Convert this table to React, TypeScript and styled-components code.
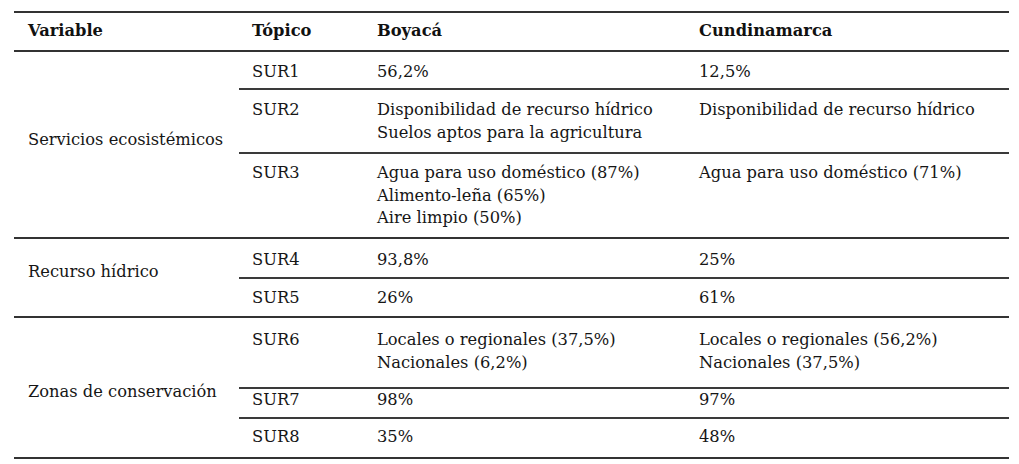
import * as React from "react";
import styled, { createGlobalStyle } from "styled-components";

const GlobalStyle = createGlobalStyle`
  html, body {
    margin: 0;
    padding: 0;
    background: #ffffff;
  }
  body {
    font-family: "DejaVu Serif", "Liberation Serif", serif;
    color: #161616;
  }
`;

interface Row {
  topic: string
  boyaca: string[]
  cundinamarca: string[]
  height: number
  pad: number
}

interface Group {
  variable: string
  offset: number
  rows: Row[]
}

const groups: Group[] = [
  {
    variable: "Servicios ecosistémicos",
    offset: -4,
    rows: [
      { topic: "SUR1", boyaca: ["56,2%"], cundinamarca: ["12,5%"], height: 36, pad: 9 },
      {
        topic: "SUR2",
        boyaca: ["Disponibilidad de recurso hídrico", "Suelos aptos para la agricultura"],
        cundinamarca: ["Disponibilidad de recurso hídrico"],
        height: 62,
        pad: 9
      },
      {
        topic: "SUR3",
        boyaca: ["Agua para uso doméstico (87%)", "Alimento-leña (65%)", "Aire limpio (50%)"],
        cundinamarca: ["Agua para uso doméstico (71%)"],
        height: 83,
        pad: 8
      }
    ]
  },
  {
    variable: "Recurso hídrico",
    offset: -5,
    rows: [
      { topic: "SUR4", boyaca: ["93,8%"], cundinamarca: ["25%"], height: 38, pad: 10 },
      { topic: "SUR5", boyaca: ["26%"], cundinamarca: ["61%"], height: 37, pad: 8 }
    ]
  },
  {
    variable: "Zonas de conservación",
    offset: 5,
    rows: [
      {
        topic: "SUR6",
        boyaca: ["Locales o regionales (37,5%)", "Nacionales (6,2%)"],
        cundinamarca: ["Locales o regionales (56,2%)", "Nacionales (37,5%)"],
        height: 69,
        pad: 11
      },
      { topic: "SUR7", boyaca: ["98%"], cundinamarca: ["97%"], height: 28, pad: 0 },
      { topic: "SUR8", boyaca: ["35%"], cundinamarca: ["48%"], height: 38, pad: 7 }
    ]
  }
];

const Table = styled.div`
  width: 995px;
  margin: 11px 0 0 14px;
  border-top: 2px solid #333333;
  font-size: 16.3px;
  line-height: 22.5px;
`;

const Header = styled.div`
  display: grid;
  grid-template-columns: 225px 125px 322px 1fr;
  align-items: center;
  height: 37px;
  border-bottom: 2px solid #333333;
  font-weight: bold;
  color: #111111;
`;

const HeadCell = styled.div<{ $first?: boolean }>`
  padding-left: ${(p) => (p.$first ? 14 : 13)}px;
`;

const GroupBox = styled.div`
  display: flex;
  border-bottom: 2px solid #333333;
`;

const VarCell = styled.div<{ $offset: number }>`
  width: 225px;
  flex: none;
  display: flex;
  align-items: center;
  padding-left: 14px;
  box-sizing: border-box;
  padding-top: ${(p) => (p.$offset > 0 ? p.$offset * 2 : 0)}px;
  padding-bottom: ${(p) => (p.$offset < 0 ? -p.$offset * 2 : 0)}px;
`;

const Rows = styled.div`
  flex: 1;
  display: flex;
  flex-direction: column;
`;

const RowBox = styled.div<{ $height: number; $pad: number }>`
  display: grid;
  grid-template-columns: 125px 322px 1fr;
  align-items: start;
  height: ${(p) => p.$height}px;
  box-sizing: content-box;
  & > div {
    padding-top: ${(p) => p.$pad}px;
    padding-left: 13px;
  }
  &:not(:last-child) {
    border-bottom: 2px solid #3a3a3a;
  }
`;

const Cell = styled.div`
  white-space: nowrap;
`;

const Lines = ({ lines }: { lines: string[] }) => (
  <Cell>
    {lines.map((l, i) => (
      <div key={i}>{l}</div>
    ))}
  </Cell>
);

export default function App() {
  return (
    <>
      <GlobalStyle />
      <Table>
        <Header>
          <HeadCell $first>Variable</HeadCell>
          <HeadCell>Tópico</HeadCell>
          <HeadCell>Boyacá</HeadCell>
          <HeadCell>Cundinamarca</HeadCell>
        </Header>
        {groups.map((g) => (
          <GroupBox key={g.variable}>
            <VarCell $offset={g.offset}>{g.variable}</VarCell>
            <Rows>
              {g.rows.map((r) => (
                <RowBox key={r.topic} $height={r.height} $pad={r.pad}>
                  <Cell>{r.topic}</Cell>
                  <Lines lines={r.boyaca} />
                  <Lines lines={r.cundinamarca} />
                </RowBox>
              ))}
            </Rows>
          </GroupBox>
        ))}
      </Table>
    </>
  );
}
